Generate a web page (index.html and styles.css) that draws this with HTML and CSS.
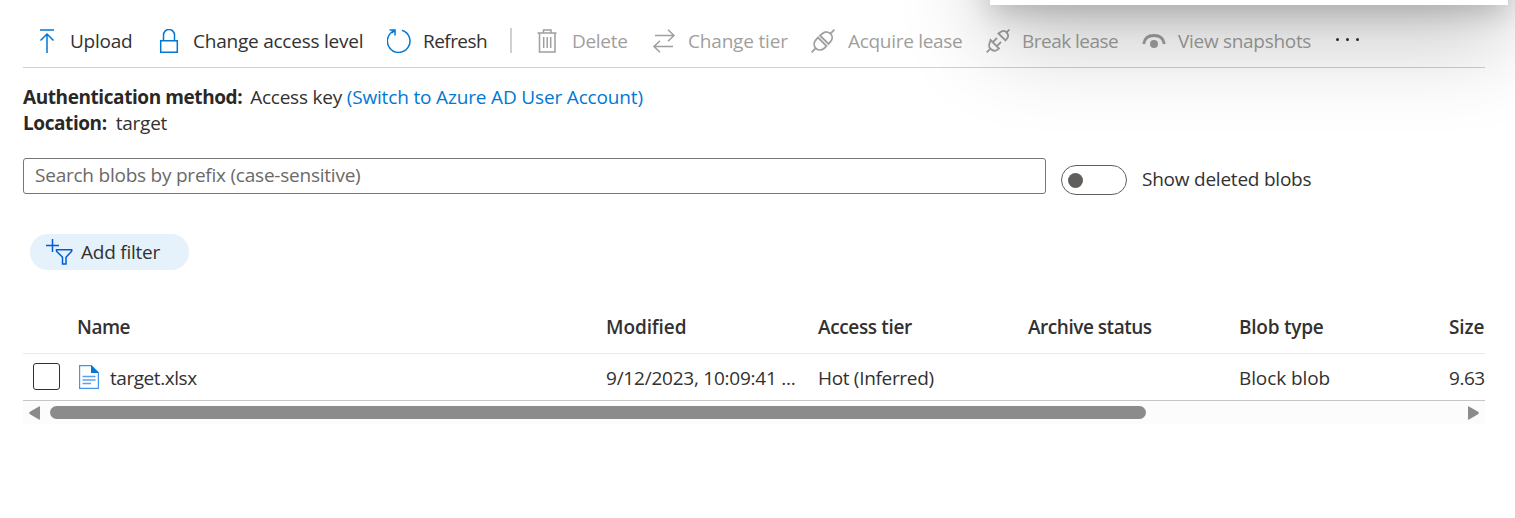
FILE: index.html
```
<!DOCTYPE html>
<html lang="en">
<head>
<meta charset="utf-8">
<title>target - Container</title>
<link rel="stylesheet" href="styles.css">
</head>
<body>
<main class="page">
  <nav class="toolbar">
    <button class="cmd upload"><svg class="icon" viewBox="0 0 24 24"><path d="M4 1h14M11 24V5M4.500 11.500 11 5l6.500 6.500"/></svg><span>Upload</span></button>
    <button class="cmd access"><svg class="icon" viewBox="0 0 24 24"><path d="M3.700 11.700h16.600v11.600H3.700zM6.500 11.700V6a5.500 5.500 0 0 1 11 0v5.700"/></svg><span>Change access level</span></button>
    <button class="cmd refresh"><svg class="icon" viewBox="0 0 24 24"><path d="M15 1.300a11.300 11.300 0 1 1-7.500.3M2.500 1H8v5.500M7.800 1.200 5 4"/></svg><span>Refresh</span></button>
    <i class="divider"></i>
    <button class="cmd off delete"><svg class="icon" viewBox="0 0 24 24"><path d="M1.500 4h19M3.500 4v19h15.500V4M7.500 4V1h7.500v3M7.700 8v11M11.200 8v11M14.700 8v11"/></svg><span>Delete</span></button>
    <button class="cmd off tier"><svg class="icon" viewBox="0 0 24 24"><path d="M3 6.500h19M16 .8l6 5.700-6 5.700M21 17.500H2M8 11.800l-6 5.700 6 5.700"/></svg><span>Change tier</span></button>
    <button class="cmd off acquire"><svg class="icon plug" viewBox="0 0 24 24"><path d="M.6 23.400 4.800 19.200M19.200 4.800 23.400.6M7 8.500l8.500 8.500-2.300 2.300c-2.500 2.200-6 2.200-8.300 0s-2.300-5.800 0-8.400zM9 6.500l8.500 8.500 2-2.300c2.200-2.500 2.200-5.800 0-8s-5.700-2.200-8-.2z"/></svg><span>Acquire lease</span></button>
    <button class="cmd off break"><svg class="icon plug" viewBox="0 0 24 24"><path d="m.6 23.400 3.600-3.600M19.800 4.200 23.400.6M4.500 11l8.500 8.500-2 1.500c-2.200 1.300-4.500.8-6.300-1s-2-4.300-.8-6.500zM7 13l4-4M11 17l4-4M12.500 4.500l7 7 2-2.700c1.200-1.800.7-3.500-.7-5.200s-3.500-2.200-5.300-1z"/></svg><span>Break lease</span></button>
    <button class="cmd off view"><svg class="icon" viewBox="0 0 24 24"><path class="lid" d="M1.700 15C2.500 9 7 6.500 12 6.500S21.500 9 22.300 15"/><circle class="pupil" cx="12" cy="15" r="4"/></svg><span>View snapshots</span></button>
    <button class="more" aria-label="More"><i></i><i></i><i></i></button>
  </nav>
  <section class="details">
    <div><b class="auth">Authentication method:</b><span class="key">Access key</span> <a class="switch">(Switch to Azure AD User Account)</a></div>
    <div><b class="loc">Location:</b><span class="place">target</span></div>
  </section>
  <section class="search-row">
    <div class="search"><span>Search blobs by prefix (case-sensitive)</span></div>
    <div class="toggle"><i></i></div>
    <span class="deleted">Show deleted blobs</span>
  </section>
  <button class="filter"><svg viewBox="0 0 28 26"><path d="M7.500 0v13M1 6.500h13"/><path d="M11.500 10.700h15.200v1.500l-5.700 6V25h-3.500v-6.800l-6-6z"/></svg><span>Add filter</span></button>
  <section class="grid">
    <div class="row head">
      <span></span><span class="h-name">Name</span><span class="h-mod">Modified</span><span class="h-tier">Access tier</span><span class="h-arch">Archive status</span><span class="h-type">Blob type</span><span class="h-size">Size</span>
    </div>
    <div class="row item">
      <span><i class="checkbox"></i></span>
      <span class="file"><svg viewBox="0 0 20 24"><path class="sheet" d="M.6.600h11.700l7.100 7.100v15.700H.6z"/><path class="fold" d="M12 0l8 8h-8z"/><path class="lines" d="M3.500 11.500h13M3.500 15h13M3.500 18.500h8.500"/></svg><span class="c-name">target.xlsx</span></span>
      <span class="c-mod">9/12/2023, 10:09:41 ...</span><span class="c-tier">Hot (Inferred)</span><span></span><span class="c-type">Block blob</span><span class="c-size">9.63</span>
    </div>
    <div class="scrollbar">
      <svg viewBox="0 0 11 14"><path d="M11 1v12q0 1-1 .6L.5 8Q0 7 .5 6L10 .4Q11 0 11 1z"/></svg>
      <div class="track"><i></i></div>
      <svg viewBox="0 0 11 14"><path d="M0 1v12q0 1 1 .6L10.500 8q.5-1 0-2L1 .4Q0 0 0 1z"/></svg>
    </div>
  </section>
</main>
<div class="flyout"></div>
</body>
</html>
```
FILE: styles.css
```
* { box-sizing: border-box; }
body {
  margin: 0;
  height: 518px;
  overflow: hidden;
  position: relative;
  background: #fff;
  color: #323130;
  font: 19px/26px "Open Sans", "Noto Sans", sans-serif;
  letter-spacing: -.23px;
  white-space: nowrap;
}
button { border: 0; padding: 0; background: none; font: inherit; color: inherit; letter-spacing: inherit; }
svg { display: block; flex: none; fill: none; }
.page { padding: 14px 30px 0 23px; }

.toolbar { height: 54px; display: flex; align-items: center; border-bottom: 1px solid #d2d0ce; }
.cmd { display: flex; align-items: center; gap: 12px; flex: none; }
.cmd span { flex: none; padding-top: 1px; }
.icon { width: 24px; height: 24px; stroke: #0078d4; stroke-width: 1.5; }
.off { color: #a19f9d; }
.off .icon { stroke: #a19f9d; }
.icon.plug { stroke-width: 1.8; }
.icon .lid { stroke-width: 2.8; }
.icon .pupil { fill: #a19f9d; stroke: none; }
.upload { width: 121px; padding-left: 13px; gap: 10px; }
.access { width: 243px; padding-left: 13px; }
.refresh { width: 101px; gap: 12px; letter-spacing: -.55px; }
.divider { width: 2px; height: 25px; background: #d2d0ce; margin: 0 24px 0 22px; }
.delete { width: 116px; letter-spacing: -.3px; }
.tier { width: 159px; letter-spacing: -.18px; }
.acquire { width: 175px; letter-spacing: -.3px; gap: 13px; }
.break { width: 156px; letter-spacing: -.52px; }
.view { width: 194px; letter-spacing: -.3px; }
.more { display: flex; gap: 7px; margin-bottom: 3px; }
.more i { width: 3px; height: 3px; border-radius: 50%; background: #323130; }

.details { margin-top: 16px; height: 74px; }
.details b { font-weight: 700; color: #292827; letter-spacing: -.42px; }
.key { margin-left: 8px; }
.place { margin-left: 9px; }
.switch { color: #0078d4; letter-spacing: -.16px; }

.search-row { display: flex; height: 36px; }
.search { width: 1023px; height: 36px; border: 1px solid #797775; border-radius: 3px; padding: 3px 11px; color: #6b6967; }
.toggle { width: 66px; height: 30px; margin: 7px 15px 0; border: 1px solid #605e5c; border-radius: 15px; padding: 6px; }
.toggle i { display: block; width: 15px; height: 15px; margin-top: 1px; border-radius: 50%; background: #605e5c; }
.deleted { padding-top: 8px; }

.filter { display: flex; align-items: center; gap: 8px; width: 159px; height: 36px; margin: 40px 0 0 7px; padding-left: 15px; border-radius: 18px; background: #e5f1fb; }
.filter svg { width: 28px; height: 26px; margin-top: -1px; stroke: #015cda; stroke-width: 1.5; }

.grid { margin-top: 31px; }
.row { display: grid; grid-template-columns: 54px 529px 212px 210px 211px 210px 36px; align-items: center; }
.head { height: 53px; border-bottom: 1px solid #edebe9; font-weight: 600; }
.h-name, .h-arch { letter-spacing: -.47px; }
.h-mod, .c-type { letter-spacing: -.1px; }
.h-tier { letter-spacing: -.36px; }
.h-size { letter-spacing: -.1px; }
.item { height: 47px; border-bottom: 1px solid #c8c6c4; }
.item > span { padding-top: 2px; }
.c-name, .c-size { letter-spacing: -.45px; }
.c-tier { letter-spacing: -.32px; }
.checkbox { display: block; width: 27px; height: 27px; margin: -3px 0 0 10px; border: 1px solid #323130; border-radius: 3px; }
.file { display: flex; align-items: center; gap: 11px; padding-left: 2px; }
.file svg { width: 20px; height: 24px; margin-top: -3px; }
.sheet { fill: #fff; stroke: #4795e8; stroke-width: 1.2; }
.fold { fill: #0078d4; }
.lines { stroke: #5ea0ef; stroke-width: 1.6; }
.scrollbar { display: flex; align-items: center; height: 23px; padding: 0 6px; background: #fcfcfc; }
.scrollbar svg { width: 11px; height: 14px; fill: #8b8b8b; }
.track { flex: 1; padding: 0 10px; }
.track i { display: block; width: 1096px; height: 13px; border-radius: 7px; background: #8b8b8b; }

.flyout { position: absolute; left: 990px; top: -400px; width: 518px; height: 405px; background: #fff; box-shadow: 0 37px 83px rgba(0,0,0,.22), 0 8px 26px rgba(0,0,0,.18); }
```
